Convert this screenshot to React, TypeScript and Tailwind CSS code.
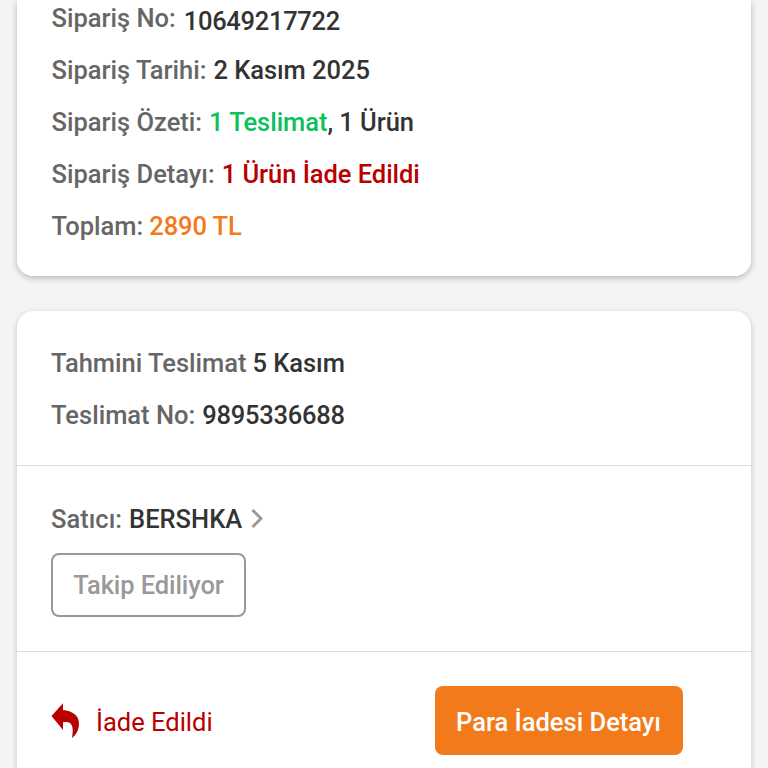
import React from 'react';

interface InfoRowProps {
    label: string;
    children: React.ReactNode;
}

const InfoRow = ({ label, children }: InfoRowProps) => (
    <div className="h-[52px] flex items-center gap-[7px] whitespace-nowrap">
        <span className="text-[#666666]">{label}</span>
        <span className="text-[#333333] tracking-[-0.05px]">{children}</span>
    </div>
);

const App = () => {
    return (
        <div className="h-[768px] overflow-hidden bg-[#f4f4f4] px-[17px] font-[Roboto,sans-serif] text-[25.5px] leading-[30px] font-medium">
            {/* Order summary */}
            <div className="h-[276px] bg-white rounded-b-2xl shadow-[0_2px_6px_rgba(0,0,0,0.26)] px-[34.5px] overflow-hidden">
                <div className="-mt-2">
                    <InfoRow label="Sipariş No:">
                        <span className="inline-block pt-[6px] pl-px tracking-[-0.3px]">10649217722</span>
                    </InfoRow>
                    <InfoRow label="Sipariş Tarihi:">2 Kasım 2025</InfoRow>
                    <InfoRow label="Sipariş Özeti:">
                        <span className="text-[#0bc15c]">1 Teslimat</span>, 1 Ürün
                    </InfoRow>
                    <InfoRow label="Sipariş Detayı:">
                        <span className="text-[#b80000]">1 Ürün İade Edildi</span>
                    </InfoRow>
                    <InfoRow label="Toplam:">
                        <span className="-ml-px text-[#f27a1a] tracking-[-0.1px]">2890 TL</span>
                    </InfoRow>
                </div>
            </div>

            {/* Delivery */}
            <div className="mt-[35px] h-[480px] bg-white rounded-t-2xl shadow-[0_2px_6px_rgba(0,0,0,0.2)]">
                <div className="h-[155px] px-[34px] pt-[26px] border-b border-[#dedede]">
                    <InfoRow label="Tahmini Teslimat">
                        <span className="-ml-px">5 Kasım</span>
                    </InfoRow>
                    <InfoRow label="Teslimat No:">
                        <span className="tracking-[-0.25px]">9895336688</span>
                    </InfoRow>
                </div>

                <div className="h-[186px] px-[34px] pt-[27px] border-b border-[#dedede]">
                    <div className="flex items-center gap-[9px]">
                        <InfoRow label="Satıcı:">
                            <span className="tracking-normal">BERSHKA</span>
                        </InfoRow>
                        <svg width="12" height="20" viewBox="0 0 12 20" fill="none" stroke="#999999" strokeWidth="3">
                            <path d="M1.5 1 10 9.5 1.5 18" />
                        </svg>
                    </div>
                    <button className="mt-2 w-[195px] h-[64px] rounded-lg border-2 border-[#999999] text-[#999999] tracking-[-0.1px]">
                        Takip Ediliyor
                    </button>
                </div>

                <div className="flex items-center justify-between pl-[34px] pr-[68.5px] pt-[34px]">
                    <div className="flex items-center gap-[17px] font-normal text-[#b80000]">
                        <svg width="28" height="36" viewBox="0 0 28 36" fill="#b80000">
                            <path d="M.5 13 12 .3V7C21 7.500 28 12.500 28 20.500C28 27 25 32 21 35C22.500 27 22 20 17 19.300C15 19 13.500 19 12 19.200V27Z" />
                        </svg>
                        <span className="pt-[2px]">İade Edildi</span>
                    </div>
                    <button className="w-[248px] h-[69px] pt-[2px] rounded-lg bg-[#f27a1a] text-white">
                        Para İadesi Detayı
                    </button>
                </div>
            </div>
        </div>
    );
};

export default App;
